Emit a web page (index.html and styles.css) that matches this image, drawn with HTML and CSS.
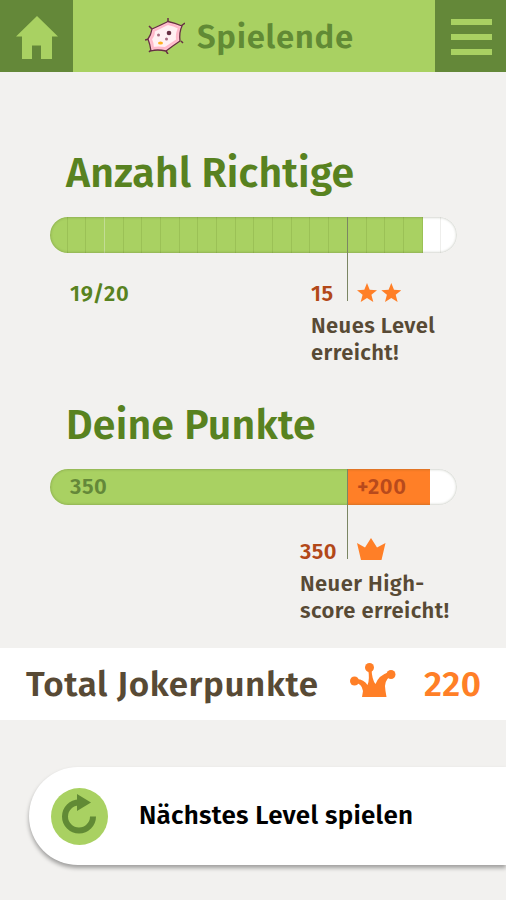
FILE: index.html
```html
<!DOCTYPE html>
<html lang="de">
<head>
    <meta charset="UTF-8">
    <meta name="viewport" content="width=device-width, initial-scale=1.0">
    <title>Spielende</title>
    <link rel="stylesheet" href="styles.css">
</head>
<body>
    <header class="topbar">
        <a class="topbar-btn" href="#" aria-label="Home">
            <svg width="42" height="43" viewBox="0 0 42 43"><path d="M21 0 42 20.500H36V43H25V29.500H16V43H6V20.500H0z" fill="#a9d162"/></svg>
        </a>
        <div class="topbar-title">
            <svg class="cell-icon" width="40" height="36" viewBox="0 0 40 36">
                <path d="M7 11 4 8M23 4V0M36 8 40 5M36 23 38 25M21 33 23 36M6 32 4 34M4 21 0 22" stroke="#673044" stroke-width="1.500"/>
                <path d="M7 11Q16 7 23 3.500Q30 5 37 8Q34 14 35 23Q29 27 21 33Q12 31 6 33Q5 26 3 21Q6 17 7 11z" fill="#ffc3d2" stroke="#673044" stroke-width="1.300"/>
                <path d="M9 13Q17 9 23 6Q29 7 34 10Q31 16 32 22Q26 26 20 30Q13 29 8 30Q8 25 6 21Q9 18 9 13z" fill="#fff0f3" stroke="#ffb9ca" stroke-width="1.800"/>
                <circle cx="24" cy="15" r="2.300" fill="#673044"/>
                <circle cx="13.500" cy="17" r="1.500" fill="#a86c81"/>
                <circle cx="21.500" cy="21" r="1.500" fill="#a86c81"/>
                <ellipse cx="15.500" cy="25" rx="2.500" ry="1.500" fill="#ffb01f"/>
            </svg>
            <h1>Spielende</h1>
        </div>
        <a class="topbar-btn menu" href="#" aria-label="Menu">
            <span></span><span></span><span></span>
        </a>
    </header>

    <main>
        <section class="result">
            <h2 class="title-correct">Anzahl Richtige</h2>
            <div class="bar-wrap">
                <div class="bar steps">
                    <i class="cap done"></i>
                    <i class="done"></i><i class="done light"></i><i class="done"></i><i class="done"></i><i class="done"></i>
                    <i class="done"></i><i class="done"></i><i class="done"></i><i class="done"></i><i class="done"></i>
                    <i class="done"></i><i class="done"></i><i class="done"></i><i class="done"></i><i class="done"></i>
                    <i class="done"></i><i class="done"></i><i class="done"></i><i class="done"></i><i></i>
                    <i class="cap"></i>
                </div>
                <div class="marker"></div>
            </div>
            <div class="legend">
                <span class="count">19/20</span>
                <div class="note">
                    <div class="note-head">
                        <span class="goal">15</span>
                        <svg class="stars" width="44" height="20" viewBox="0 0 44 20" fill="#ff7f27">
                            <path id="star" d="M10 0 12.700 6.800 20 7.200 14.400 11.800 16.300 19 10 15 3.700 19 5.600 11.800 0 7.200 7.300 6.800z"/>
                            <use href="#star" x="24.300"/>
                        </svg>
                    </div>
                    <p class="level-text">Neues Level<br>erreicht!</p>
                </div>
            </div>
        </section>

        <section class="result points">
            <h2 class="title-points">Deine Punkte</h2>
            <div class="bar-wrap">
                <div class="bar">
                    <div class="base">350</div>
                    <div class="bonus">+200</div>
                </div>
                <div class="marker"></div>
            </div>
            <div class="legend">
                <div class="note">
                    <div class="note-head">
                        <span class="goal">350</span>
                        <svg class="crown" width="29" height="22" viewBox="0 0 29 22"><path d="M0 5 8 9.500 14 0 20 9.500 28.500 5 24.500 22H4z" fill="#ff7f27"/></svg>
                    </div>
                    <p class="score-text">Neuer High-<br>score erreicht!</p>
                </div>
            </div>
        </section>

        <section class="total">
            <span class="total-label">Total Jokerpunkte</span>
            <svg class="joker" width="46" height="35" viewBox="0 0 46 35" fill="#ff7f27">
                <circle cx="4.500" cy="18" r="4.500"/>
                <circle cx="19.500" cy="4.500" r="4.500"/>
                <circle cx="41" cy="11.500" r="4.500"/>
                <path d="M4 16.500Q13 15 17.500 22Q20 16 18 6L21.500 6Q22 17 25.500 21Q29 12 39 9L41 13Q33 18 35.500 28L36.500 34H12L13 28Q12 20 4 19.500z"/>
            </svg>
            <span class="total-value">220</span>
        </section>

        <a class="next" href="#">
            <svg width="57" height="57" viewBox="0 0 57 57">
                <circle cx="28.500" cy="28.500" r="28.500" fill="#a9d162"/>
                <path d="M42 28.500A14 14 0 1 1 28 14.500" fill="none" stroke="#618a35" stroke-width="6"/>
                <path d="M26 6 40 14.500 26 23z" fill="#618a35"/>
            </svg>
            <span>Nächstes Level spielen</span>
        </a>
    </main>
</body>
</html>
```
FILE: styles.css
```css
* {
    margin: 0;
    padding: 0;
    box-sizing: border-box;
}

body {
    font-family: 'Fira Sans', 'Noto Sans', sans-serif;
    font-weight: 600;
    background: #f2f1ef;
    color: #584a35;
    height: 900px;
    overflow: hidden;
}

svg {
    display: block;
    flex: none;
}

a {
    color: inherit;
    text-decoration: none;
}

/* Header */
.topbar {
    display: flex;
    height: 72px;
    background: #a9d162;
}

.topbar-btn {
    width: 73px;
    padding: 16px 0 0 16px;
    background: #648839;
}

.topbar-title {
    flex: 1;
    display: flex;
    align-items: center;
    padding-left: 72px;
    color: #618a35;
}

.topbar-title h1 {
    font-size: 33px;
    font-weight: 600;
    line-height: 40px;
    letter-spacing: 0.7px;
    margin: 2px 0 0 12px;
    white-space: nowrap;
}

.menu {
    width: 71px;
    display: flex;
    flex-direction: column;
    gap: 9px;
    padding-top: 19px;
}

.menu span {
    width: 41px;
    height: 6px;
    background: #a9d162;
}

/* Results */
.result {
    height: 252px;
    padding: 77px 49px 0 50px;
}

.result h2 {
    font-size: 41px;
    font-weight: 600;
    line-height: 50px;
    letter-spacing: 0.2px;
    color: #588220;
    margin-left: 16px;
    white-space: nowrap;
}

.bar-wrap {
    position: relative;
    margin-top: 18px;
}

.bar {
    position: relative;
    display: flex;
    height: 36px;
    border-radius: 18px;
    overflow: hidden;
    background: #fff;
}

.bar::after {
    content: '';
    position: absolute;
    inset: 0;
    border-radius: 18px;
    box-shadow: inset 0 0 3px rgba(50, 60, 30, 0.4);
}

.steps i {
    flex: 0 0 18.7px;
    border-right: 1px solid #eeeeec;
}

.steps .done {
    background: #a9d162;
    border-right-color: #9bc156;
}

.steps .light {
    border-right-color: #c3dc95;
}

.steps .cap {
    flex: 0 0 17.5px;
}

.steps .cap:last-child {
    border-right: 0;
}

.marker {
    position: absolute;
    left: 297px;
    top: 0;
    width: 1px;
    height: 84px;
    background: #7b8663;
}

.legend {
    display: flex;
    padding-top: 27px;
    font-size: 22px;
    line-height: 28px;
    letter-spacing: 0.4px;
}

.count {
    width: 241px;
    margin-left: 20px;
    letter-spacing: 0.7px;
    color: #588220;
}

.note {
    white-space: nowrap;
}

.note-head {
    display: flex;
    align-items: center;
}

.goal {
    width: 46px;
    color: #b24818;
}

.stars {
    margin-top: -2px;
}

.note p {
    margin-top: 4px;
    line-height: 27px;
}

.points .legend {
    padding: 33px 0 0 250px;
}

.points .marker {
    height: 90px;
}

.points .goal {
    width: 57px;
}

.crown {
    margin-top: -7px;
}

.base,
.bonus {
    font-size: 22px;
    line-height: 36px;
    letter-spacing: 0.6px;
}

.base {
    width: 297px;
    padding-left: 20px;
    background: #a9d162;
    color: #648839;
}

.bonus {
    width: 83px;
    padding-left: 10px;
    background: #ff7f27;
    color: #b84a1c;
}

/* Total */
.total {
    display: flex;
    align-items: center;
    height: 72px;
    margin-top: 72px;
    padding-left: 26px;
    background: #fff;
    font-size: 35px;
    white-space: nowrap;
}

.total-label {
    width: 324px;
    letter-spacing: 0.55px;
}

.joker {
    margin-top: -7px;
}

.total-value {
    margin-left: 28px;
    letter-spacing: 0.4px;
    color: #ff7f27;
}

/* Next level button */
.next {
    display: flex;
    align-items: center;
    height: 98px;
    margin: 47px 0 0 29px;
    padding-left: 22px;
    border-radius: 49px 0 0 49px;
    background: #fff;
    box-shadow: 0 3px 4px rgba(0, 0, 0, 0.35);
    color: #000;
    font-size: 26px;
    letter-spacing: 0.25px;
    white-space: nowrap;
}

.next span {
    margin: -1px 0 0 31px;
}
```
